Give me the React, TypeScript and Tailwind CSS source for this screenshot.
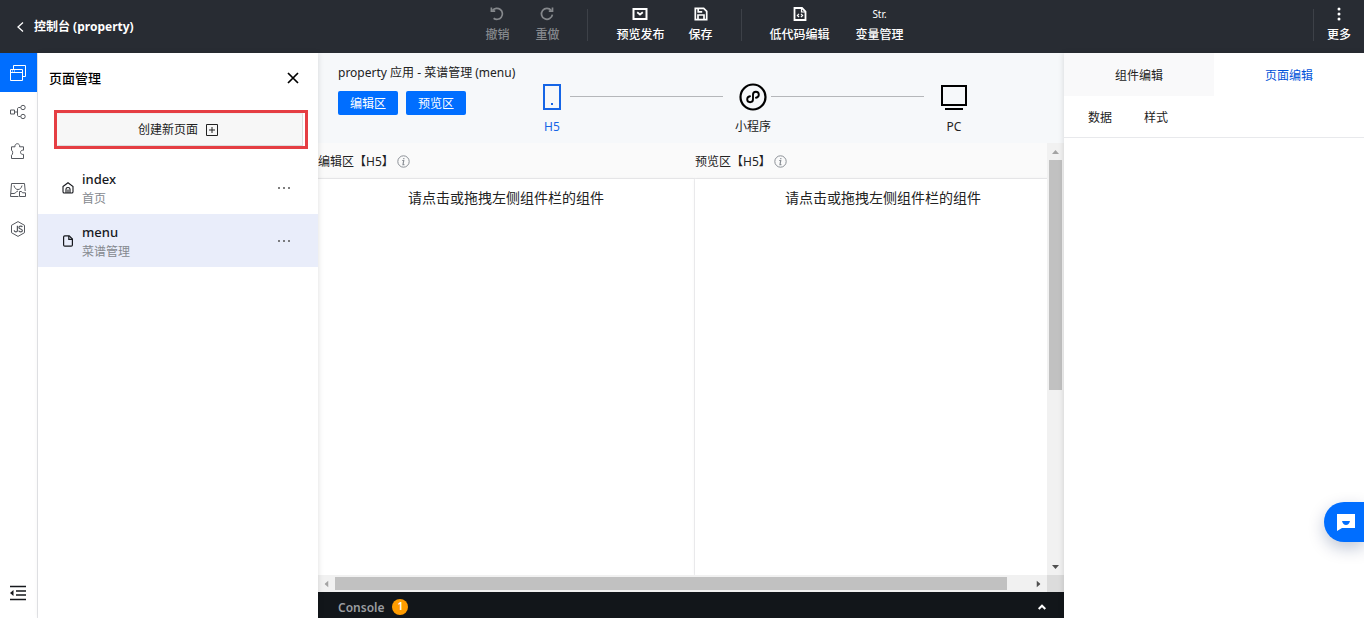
import React, { useState } from 'react';

interface IconProps {
  className?: string;
}

interface PageItem {
  name: string;
  title: string;
  home?: boolean;
}

const pages: PageItem[] = [
  { name: 'index', title: '首页', home: true },
  { name: 'menu', title: '菜谱管理' },
];

const BackIcon = () => (
  <svg width="8" height="12" viewBox="0 0 8 12" fill="none" stroke="currentColor" strokeWidth="1.3">
    <path d="M7 1.5 2 6 7 10.500" />
  </svg>
);

const UndoIcon = () => (
  <svg width="16" height="16" viewBox="0 0 16 16" fill="none" stroke="currentColor" strokeWidth="1.7">
    <path d="M3.600 4.400A5.500 5.500 0 1 1 4.600 12.200" />
    <path d="M2.400 1.600v3.600h3.800" />
  </svg>
);

const RedoIcon = () => (
  <svg width="16" height="16" viewBox="0 0 16 16" fill="none" stroke="currentColor" strokeWidth="1.7">
    <path d="M12.300 4.400A5.500 5.500 0 1 0 13.400 8.600" />
    <path d="M13.500 1.600v3.600H9.800" />
  </svg>
);

const PublishIcon = () => (
  <svg width="16" height="16" viewBox="0 0 16 16" fill="none" stroke="currentColor">
    <path d="M1.500 3h13v10h-13z" strokeWidth="2" />
    <path d="m5.200 6.300 2.800 2.200 2.800-2.200" strokeWidth="1.800" />
  </svg>
);

const SaveIcon = () => (
  <svg width="16" height="16" viewBox="0 0 16 16" fill="none" stroke="currentColor" strokeWidth="1.7">
    <path d="M2.300 2.300h8.400l3 3v8.400H2.300z" />
    <path d="M5 13.500V9h6v4.500M5.200 2.500v3.300h4" />
  </svg>
);

const CodeFileIcon = () => (
  <svg width="16" height="16" viewBox="0 0 16 16" fill="none" stroke="currentColor">
    <path d="M2.500 2h7.500l3.500 3.500V14h-11z" strokeWidth="1.800" />
    <path d="M9.500 2v4h4" strokeWidth="1.200" />
    <path d="M7 7.800 5.400 9.400 7 11M9 7.800l1.600 1.600L9 11" strokeWidth="1.200" />
  </svg>
);

const MoreIcon = () => (
  <svg width="16" height="16" viewBox="0 0 16 16" fill="currentColor">
    <circle cx="8" cy="3" r="1.500" />
    <circle cx="8" cy="8" r="1.500" />
    <circle cx="8" cy="13" r="1.500" />
  </svg>
);

const PagesIcon = () => (
  <svg width="16" height="16" viewBox="0 0 16 16" fill="none" stroke="currentColor">
    <path d="M.5 4.500h12v11H.5zM.5 7.500h12M3.500 4V.5h12v11H13M2 6h1M4 6h1" />
  </svg>
);

const FlowIcon = () => (
  <svg width="16" height="16" viewBox="0 0 16 16" fill="none" stroke="currentColor">
    <path d="M.5 6h4v4h-4zM4.500 8h3M10.500 3.500H9C8 3.500 7.500 4 7.500 5v6c0 1 .5 1.500 1.500 1.500h1.500" />
    <circle cx="13" cy="3.500" r="2.200" />
    <circle cx="13" cy="12.500" r="2.200" />
  </svg>
);

const PuzzleIcon = () => (
  <svg width="16" height="16" viewBox="0 0 16 16" fill="none" stroke="currentColor">
    <path d="M1.500 3.800H5a2.400 2.400 0 1 1 4.600 0h3.900v3.400c-4-.6-4 4.800 0 4.200v4.100h-12v-3.300c1.600-.5 1.600-4.500 0-5z" />
  </svg>
);

const AssetIcon = () => (
  <svg width="16" height="16" viewBox="0 0 16 16" fill="none" stroke="currentColor">
    <path d="M8.500 14.500h-8l1-13h13l.7 7.500" />
    <path d="M4 3.500c.6 2.600 2 4 4 4s3.400-1.400 4-4M1 11.500h3c1.500 0 2-2 4-2.500" />
    <path d="M9.500 9.500h2l1 1.300h3v3.700h-6z" />
  </svg>
);

const JsIcon = () => (
  <svg width="16" height="16" viewBox="0 0 16 16" fill="none" stroke="currentColor">
    <path d="M8 .6 14.500 4.300v7.400L8 15.400 1.500 11.700V4.300z" />
    <path
      d="M7.400 4.800v5c0 1.400-3.200 1.500-3.200-.5M12.300 6c-.4-1.400-3.400-1.300-3.400.4s3.500 1.400 3.500 3.100-3.200 1.700-3.700.1"
      strokeWidth="1.200"
    />
  </svg>
);

const CollapseIcon = () => (
  <svg width="18" height="16" viewBox="0 0 18 16" fill="none" stroke="currentColor" strokeWidth="1.600">
    <path d="M1 1.500h16M7 6h10M7 10h10M1 14.500h16" />
    <path d="M4.500 5v6L1 8z" fill="currentColor" stroke="none" />
  </svg>
);

const CloseIcon = () => (
  <svg width="12" height="12" viewBox="0 0 12 12" fill="none" stroke="currentColor" strokeWidth="1.700">
    <path d="m1 1 10 10M11 1 1 11" />
  </svg>
);

const PlusBoxIcon = () => (
  <svg width="12" height="12" viewBox="0 0 12 12" fill="none" stroke="currentColor">
    <path d="M.5.5h11v11H.5zM6 3v6M3 6h6" />
  </svg>
);

const HomeIcon = () => (
  <svg width="12" height="12" viewBox="0 0 12 12" fill="none" stroke="currentColor" strokeWidth="1.100">
    <path d="M1 4.500 6 .8l5 3.700v5.200q0 1.300-1.300 1.300H2.300Q1 11 1 9.700z" />
    <path d="M4 11V7q0-1.500 2-1.500T8 7v4M6 7.500V11" />
  </svg>
);

const FileIcon = () => (
  <svg width="12" height="12" viewBox="0 0 12 12" fill="none" stroke="currentColor" strokeWidth="1.200">
    <path d="M2.800.8h4.400l3.200 3.200v6q0 1.200-1.200 1.200H2.800q-1.200 0-1.200-1.200V2q0-1.200 1.200-1.200z" />
    <path d="M6.800 1v3.400h3.500" />
  </svg>
);

const InfoIcon = () => (
  <svg width="13" height="13" viewBox="0 0 13 13" fill="none" stroke="currentColor">
    <circle cx="6.500" cy="6.500" r="5.700" />
    <path d="M5.200 5.500h1.500l-.7 4.200h1.400M6.800 3v1.300" strokeWidth="1.200" />
  </svg>
);

const PhoneIcon = () => (
  <svg width="28" height="28" viewBox="0 0 28 28" fill="none" stroke="currentColor" strokeWidth="2">
    <path d="M6 2h16v24H6z" />
    <path d="M13 21h2" />
  </svg>
);

const MiniProgramIcon = () => (
  <svg width="28" height="28" viewBox="0 0 28 28" fill="none" stroke="currentColor" strokeLinecap="round">
    <circle cx="14" cy="14" r="12.500" strokeWidth="2.200" />
    <path
      d="M11 13.300c-1.600.3-2.800 1.500-2.800 3 0 1.700 1.300 2.900 2.900 2.900s2.900-1.200 2.900-2.900v-4.600c0-1.700 1.300-2.900 2.900-2.900s2.900 1.200 2.900 2.900c0 1.500-1.200 2.700-2.800 3"
      strokeWidth="1.900"
    />
  </svg>
);

const PcIcon = () => (
  <svg width="28" height="28" viewBox="0 0 28 28" fill="none" stroke="currentColor" strokeWidth="2">
    <path d="M2 3h24v19H2zM5 26h18" />
  </svg>
);

const Arrow = ({ className = '' }: IconProps) => (
  <svg className={className} width="7" height="4" viewBox="0 0 7 4" fill="currentColor">
    <path d="M0 4 3.500 0 7 4z" />
  </svg>
);

const ToolButton: React.FC<{ label: string; disabled?: boolean; children: React.ReactNode }> = ({
  label,
  disabled,
  children,
}) => (
  <button
    type="button"
    disabled={disabled}
    className={`flex flex-col items-center gap-[5px] whitespace-nowrap font-medium ${
      disabled ? 'text-[#85888c]' : 'text-white'
    }`}
  >
    <span className="flex h-4 items-center">{children}</span>
    <span className="leading-4">{label}</span>
  </button>
);

const Divider = () => <span className="mx-7 h-8 w-px bg-[#3d4148]" />;

const Header = () => (
  <header className="flex h-[53px] shrink-0 items-center bg-[#282c33] text-white">
    <div className="flex-1">
      <a href="#console" className="flex items-center gap-2.5 pl-4 font-bold">
        <BackIcon />
        控制台 (property)
      </a>
    </div>
    <nav className="flex items-center pb-1 pl-[38px]">
      <div className="flex gap-[26px]">
        <ToolButton label="撤销" disabled>
          <UndoIcon />
        </ToolButton>
        <ToolButton label="重做" disabled>
          <RedoIcon />
        </ToolButton>
      </div>
      <Divider />
      <div className="flex gap-6">
        <ToolButton label="预览发布">
          <PublishIcon />
        </ToolButton>
        <ToolButton label="保存">
          <SaveIcon />
        </ToolButton>
      </div>
      <Divider />
      <div className="flex gap-[26px]">
        <ToolButton label="低代码编辑">
          <CodeFileIcon />
        </ToolButton>
        <ToolButton label="变量管理">
          <span className="pt-0.5 text-[10px] font-normal">Str.</span>
        </ToolButton>
      </div>
    </nav>
    <div className="flex flex-1 items-center justify-end gap-[13px] pr-[13px] pb-1">
      <span className="h-8 w-px bg-[#3d4148]" />
      <ToolButton label="更多">
        <MoreIcon />
      </ToolButton>
    </div>
  </header>
);

const sideItems = [
  { label: '页面', icon: <PagesIcon /> },
  { label: '流程', icon: <FlowIcon /> },
  { label: '组件', icon: <PuzzleIcon /> },
  { label: '素材', icon: <AssetIcon /> },
  { label: '脚本', icon: <JsIcon /> },
];

const SideBar = () => (
  <aside className="flex w-[38px] shrink-0 flex-col border-r border-[#e5e6e9] text-[#55585e]">
    {sideItems.map((item, i) => (
      <button
        key={item.label}
        type="button"
        aria-label={item.label}
        className={`flex h-[39px] items-center justify-center pt-px pr-px ${i === 0 ? 'bg-[#006eff] text-white' : ''}`}
      >
        {item.icon}
      </button>
    ))}
    <button type="button" aria-label="收起" className="mt-auto flex justify-center pr-px pb-[17px] text-[#16181d]">
      <CollapseIcon />
    </button>
  </aside>
);

const PagePanel: React.FC = () => {
  const [current, setCurrent] = useState('menu');

  return (
    <section className="z-10 w-[280px] shrink-0 bg-white shadow-[1px_0_5px_rgba(0,0,0,0.1)]">
      <div className="flex h-[57px] items-center justify-between pr-[19px] pl-[11px]">
        <h2 className="pb-1.5 text-[13px] font-medium text-black">页面管理</h2>
        <button type="button" aria-label="关闭" className="pb-2 text-black">
          <CloseIcon />
        </button>
      </div>
      <div className="mr-2.5 ml-4 border-3 border-[#e53e43] pr-0.5">
        <button
          type="button"
          className="flex h-[33px] w-full items-center justify-center gap-2 border border-[#dddddd] border-t-[#f0f0f0] border-l-[#f7f7f7] bg-[#f7f7f7] pr-1 text-[#222]"
        >
          创建新页面
          <PlusBoxIcon />
        </button>
      </div>
      <ul className="mt-3">
        {pages.map((page) => (
          <li
            key={page.name}
            onClick={() => setCurrent(page.name)}
            className={`flex h-[53px] cursor-pointer items-center pr-7 pl-6 ${
              current === page.name ? 'bg-[#e9edfa]' : ''
            }`}
          >
            <span className="text-[#16181d]">{page.home ? <HomeIcon /> : <FileIcon />}</span>
            <div className="ml-2 flex-1 pt-0.5">
              <div className="text-[13px] leading-5 font-medium text-[#16181d]">{page.name}</div>
              <div className="leading-5 text-[#85898f]">{page.title}</div>
            </div>
            <button type="button" aria-label="更多操作" className="text-[#555]">
              <svg width="12" height="4" viewBox="0 0 12 4" fill="currentColor">
                <circle cx="1" cy="2" r="1" />
                <circle cx="6" cy="2" r="1" />
                <circle cx="11" cy="2" r="1" />
              </svg>
            </button>
          </li>
        ))}
      </ul>
    </section>
  );
};

const Step: React.FC<{ label: string; active?: boolean; children: React.ReactNode }> = ({
  label,
  active,
  children,
}) => (
  <button type="button" className={`flex w-9 shrink-0 flex-col items-center ${active ? 'text-[#1565e6]' : ''}`}>
    <span className={active ? '' : 'text-black'}>{children}</span>
    <span className="mt-[7px] leading-[18px] whitespace-nowrap">{label}</span>
  </button>
);

const StepLine = () => <span className="mt-[13px] mr-3 h-px flex-1 bg-[#b5b7ba]" />;

const Toolbar = () => (
  <div className="flex h-[90px] shrink-0 bg-[#f6f8fa] pl-5 text-[#222]">
    <div className="w-[196px] shrink-0 pt-2.5">
      <div className="leading-5">property 应用 - 菜谱管理 (menu)</div>
      <div className="mt-2 flex gap-2">
        <button type="button" className="h-6 w-[60px] rounded-xs bg-[#006eff] pt-0.5 text-white">
          编辑区
        </button>
        <button type="button" className="h-6 w-[60px] rounded-xs bg-[#006eff] pt-0.5 text-white">
          预览区
        </button>
      </div>
    </div>
    <div className="flex flex-1 items-start pt-[30px] pr-[92px]">
      <Step label="H5" active>
        <PhoneIcon />
      </Step>
      <StepLine />
      <Step label="小程序">
        <MiniProgramIcon />
      </Step>
      <StepLine />
      <Step label="PC">
        <PcIcon />
      </Step>
    </div>
  </div>
);

const Canvas: React.FC<{ title: string }> = ({ title }) => (
  <div className="flex flex-col">
    <div className="flex h-9 items-center gap-[3px] border-b border-[#ececee] bg-[#fafafa] pt-0.5 text-[#222]">
      <span>{title}【H5】</span>
      <span className="text-[#8b9096]">
        <InfoIcon />
      </span>
    </div>
    <div className="flex-1 border-r border-[#f0f0f2] bg-white pt-[7px] text-center text-[14px] leading-6 text-[#222] shadow-[0_0_3px_rgba(0,0,0,0.08)]">
      请点击或拖拽左侧组件栏的组件
    </div>
  </div>
);

const Workspace = () => (
  <main className="flex min-w-0 flex-1 flex-col">
    <Toolbar />
    <div className="flex min-h-0 flex-1">
      <div className="grid min-w-0 flex-1 grid-cols-[377px_377px] overflow-hidden">
        <Canvas title="编辑区" />
        <Canvas title="预览区" />
      </div>
      <div className="flex w-[17px] shrink-0 flex-col items-center bg-[#f1f1f1]">
        <span className="flex h-[17px] items-center text-[#a3a3a3]">
          <Arrow />
        </span>
        <span className="h-[230px] w-[13px] bg-[#c1c1c1]" />
        <span className="mt-auto flex h-[17px] items-center text-[#505050]">
          <Arrow className="rotate-180" />
        </span>
      </div>
    </div>
    <div className="flex h-[17px] shrink-0 bg-[#f1f1f1]">
      <div className="flex flex-1 items-center">
        <span className="flex w-[17px] justify-center text-[#a3a3a3]">
          <Arrow className="-rotate-90" />
        </span>
        <span className="h-[13px] w-[672px] bg-[#c1c1c1]" />
        <span className="ml-auto flex w-[17px] justify-center text-[#505050]">
          <Arrow className="rotate-90" />
        </span>
      </div>
      <span className="w-[17px] bg-[#dcdcdc]" />
    </div>
    <div className="flex h-[26px] shrink-0 items-center bg-[#12161a] pt-1 pr-[18px] pl-5">
      <span className="pt-0.5 font-semibold text-[#9b9da0]">Console</span>
      <span className="ml-2 flex size-4 items-center justify-center rounded-full bg-[#ff9c00] text-[10px] font-semibold text-white">
        1
      </span>
      <button type="button" aria-label="展开" className="ml-auto text-white">
        <svg width="8" height="6" viewBox="0 0 8 6" fill="none" stroke="currentColor" strokeWidth="2">
          <path d="M.7 5 4 1.700 7.300 5" />
        </svg>
      </button>
    </div>
  </main>
);

const Inspector = () => (
  <aside className="z-10 w-[300px] shrink-0 bg-white text-[#222] shadow-[-1px_0_5px_rgba(0,0,0,0.1)]">
    <div className="flex h-[43px]">
      <button type="button" className="flex-1 bg-[#f9f9fa] pt-0.5">
        组件编辑
      </button>
      <button type="button" className="flex-1 pt-0.5 text-[#0052d9]">
        页面编辑
      </button>
    </div>
    <div className="flex h-[42px] items-center gap-8 border-b border-[#e8e9ec] pt-0.5 pl-6">
      <button type="button">数据</button>
      <button type="button">样式</button>
    </div>
  </aside>
);

const App: React.FC = () => (
  <div className="flex h-screen flex-col overflow-hidden bg-white font-['Noto_Sans','Noto_Sans_CJK_SC',sans-serif] text-xs">
    <Header />
    <div className="flex min-h-0 flex-1">
      <SideBar />
      <PagePanel />
      <Workspace />
      <Inspector />
    </div>
    <button
      type="button"
      aria-label="在线咨询"
      className="fixed right-0 bottom-[76px] z-20 flex h-10 w-10 items-center justify-center rounded-l-full bg-[#006eff] pl-1 text-white shadow-[0_6px_16px_rgba(0,30,90,0.25)]"
    >
      <svg width="18" height="17" viewBox="0 0 18 17" fill="currentColor">
        <path d="M0 0h18v14H5l-5 3z" />
        <path d="M5 7h8q-1 4-4 4T5 7z" fill="#006eff" />
      </svg>
    </button>
  </div>
);

export default App;
